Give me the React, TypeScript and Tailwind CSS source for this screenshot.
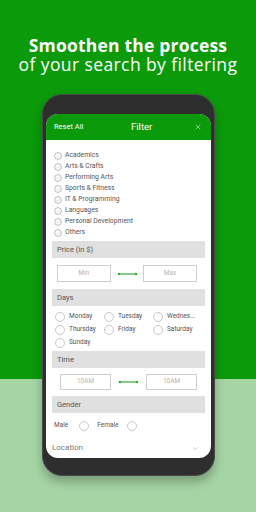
import { ChevronDown, X } from 'lucide-react';

const categories = [
  'Academics',
  'Arts & Crafts',
  'Performing Arts',
  'Sports & Fitness',
  'IT & Programming',
  'Languages',
  'Personal Development',
  'Others',
];

const days = ['Monday', 'Tuesday', 'Wednes...', 'Thursday', 'Friday', 'Saturday', 'Sunday'];

function CheckCircle() {
  return (
    <svg width="8" height="8" viewBox="0 0 8 8" className="shrink-0">
      <circle cx="4" cy="4" r="3.4" fill="none" stroke="#9e9e9e" strokeWidth="0.7" />
      <path d="M2.4 4.3 L3.5 5.2 L5.6 3" fill="none" stroke="#c4c4c4" strokeWidth="0.6" />
    </svg>
  );
}

function Radio() {
  return <span className="block w-[10px] h-[10px] rounded-full border border-[#c8c8c8] shrink-0" />;
}

function Arrow() {
  return (
    <svg width="21" height="6" viewBox="0 0 21 6">
      <line x1="1" y1="3" x2="20" y2="3" stroke="#0a9a0a" strokeWidth="1" />
      <path d="M0.5 3 L2.5 1.5 L2.5 4.5 Z" fill="#0a9a0a" />
      <path d="M20.5 3 L18.5 1.5 L18.5 4.5 Z" fill="#0a9a0a" />
    </svg>
  );
}

function SectionHeader({ label }: { label: string }) {
  return (
    <div className="mx-[6px] h-[17px] bg-[#e0e0e0] flex items-center px-[5px] text-[7.5px] text-[#555]">
      {label}
    </div>
  );
}

export default function App() {
  return (
    <div
      className="w-[256px] h-[512px] overflow-hidden flex flex-col items-center bg-[linear-gradient(#0a9a0a_379px,#a5d4a5_379px)]"
      style={{ fontFamily: 'Roboto, "Liberation Sans", sans-serif' }}
    >
      {/* Headline */}
      <div className="pt-[36px] text-white text-center leading-[19px]" style={{ fontFamily: '"Open Sans", sans-serif' }}>
        <div className="text-[17.5px] font-bold tracking-[0.2px]">Smoothen the process</div>
        <div className="text-[17.5px] tracking-[0.4px]">of your search by filtering</div>
      </div>

      {/* Phone */}
      <div className="mt-[20px] ml-[1px] w-[173px] h-[382px] rounded-[20px] bg-[#2e2e2e] border border-[#4a4a4a] pt-[19px] pb-[17px] px-[3px] shadow-[0_6px_10px_rgba(0,0,0,0.25)]">
        <div className="w-full h-full bg-white rounded-[12px] overflow-hidden flex flex-col">
          {/* Header */}
          <div className="h-[26px] bg-[#0a9a0a] flex items-center justify-between px-[8px] text-white shrink-0">
            <span className="text-[7.5px]">Reset All</span>
            <span className="text-[9.5px] ml-[6px]">Filter</span>
            <X size={8} strokeWidth={1.5} className="mr-[1px]" />
          </div>

          {/* Categories */}
          <div className="flex flex-col pt-[10px] pl-[8px]">
            {categories.map((c) => (
              <div key={c} className="h-[11px] flex items-center gap-[2px] text-[6.8px] text-[#555]">
                <CheckCircle />
                <span className="ml-[1px]">{c}</span>
              </div>
            ))}
          </div>

          <div className="mt-[3px]">
            <SectionHeader label="Price (in $)" />
          </div>
          <div className="flex items-center justify-between pl-[11px] pr-[14px] py-[7px]">
            <div className="w-[54px] h-[17px] border border-[#cfcfcf] flex items-center justify-center text-[6.5px] text-[#b5b5b5]">Min</div>
            <Arrow />
            <div className="w-[54px] h-[17px] border border-[#cfcfcf] flex items-center justify-center text-[6.5px] text-[#b5b5b5]">Max</div>
          </div>

          <SectionHeader label="Days" />
          <div className="grid grid-cols-[49px_49px_49px] gap-y-[3px] pl-[9px] pt-[6px] pb-[3px]">
            {days.map((d) => (
              <div key={d} className="h-[10px] flex items-center gap-[4px] text-[6.5px] text-[#555]">
                <Radio />
                <span className="whitespace-nowrap">{d}</span>
              </div>
            ))}
          </div>

          <SectionHeader label="Time" />
          <div className="flex items-center justify-between pl-[14px] pr-[14px] py-[6px]">
            <div className="w-[51px] h-[16px] border border-[#cfcfcf] flex items-center justify-center text-[6.5px] text-[#b5b5b5]">10AM</div>
            <Arrow />
            <div className="w-[51px] h-[16px] border border-[#cfcfcf] flex items-center justify-center text-[6.5px] text-[#b5b5b5]">10AM</div>
          </div>

          <SectionHeader label="Gender" />
          <div className="flex items-center pl-[8px] h-[25px] text-[6.5px] text-[#555]">
            <span>Male</span>
            <span className="ml-[11px]"><Radio /></span>
            <span className="ml-[8px]">Female</span>
            <span className="ml-[8px]"><Radio /></span>
          </div>

          <div className="flex items-center justify-between pl-[6px] pr-[12px] h-[20px] text-[8px] text-[#777]">
            <span>Location</span>
            <ChevronDown size={7} strokeWidth={1.5} className="text-[#888]" />
          </div>
        </div>
      </div>
    </div>
  );
}
